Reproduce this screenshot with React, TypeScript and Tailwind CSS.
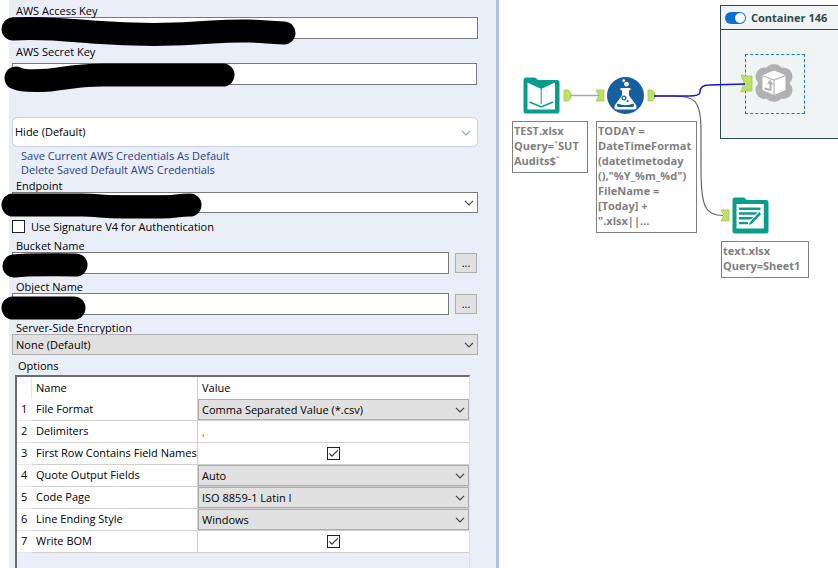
import type { ReactNode } from "react";

const fieldClass = "block w-full h-[22px] border border-[#7a7a7a] bg-white px-1 outline-none";

function Chevron({ className }: { className: string }) {
  return (
    <svg viewBox="0 0 10 6" className={`pointer-events-none absolute w-[10px] h-[6px] ${className}`}>
      <path d="M1 0.8 L5 4.8 L9 0.8" fill="none" stroke="currentColor" strokeWidth="1.2" />
    </svg>
  );
}

function Redaction({ d }: { d: string }) {
  return (
    <svg className="pointer-events-none absolute left-0 top-0 h-px w-px overflow-visible" aria-hidden="true">
      <path d={d} fill="none" stroke="#000" strokeWidth="23" strokeLinecap="round" strokeLinejoin="round" />
    </svg>
  );
}

function Label({ htmlFor, children }: { htmlFor: string; children: ReactNode }) {
  return (
    <label htmlFor={htmlFor} className="block pl-1 leading-3">
      {children}
    </label>
  );
}

function GridSelect({ label, value }: { label: string; value: string }) {
  return (
    <div className="relative">
      <select
        aria-label={label}
        className="block h-[21px] w-full appearance-none border border-[#adadad] bg-[#e1e1e1] pl-[3px] pt-[2px] outline-none"
      >
        <option>{value}</option>
      </select>
      <Chevron className="right-1 top-2 text-[#444]" />
    </div>
  );
}

function CheckBox({ id, label, checked }: { id?: string; label?: string; checked?: boolean }) {
  return (
    <span className="relative block size-[13px]">
      <input
        type="checkbox"
        id={id}
        aria-label={label}
        defaultChecked={checked}
        className="peer block size-[13px] appearance-none border border-[#222] bg-white"
      />
      <svg viewBox="0 0 13 13" className="pointer-events-none absolute inset-0 hidden peer-checked:block">
        <path d="M2.5 6.5 L5 9.2 L10.7 3.3" fill="none" stroke="#333" strokeWidth="1.2" />
      </svg>
    </span>
  );
}

const options = [
  { name: "File Format", type: "select", value: "Comma Separated Value (*.csv)" },
  { name: "Delimiters", type: "text", value: "," },
  { name: "First Row Contains Field Names", type: "check", value: "" },
  { name: "Quote Output Fields", type: "select", value: "Auto" },
  { name: "Code Page", type: "select", value: "ISO 8859-1 Latin I" },
  { name: "Line Ending Style", type: "select", value: "Windows" },
  { name: "Write BOM", type: "check", value: "" },
];

function OptionsTable() {
  return (
    <table className="w-full table-fixed border-separate border-spacing-0 bg-white">
      <colgroup>
        <col className="w-[15px]" />
        <col className="w-[166px]" />
        <col />
      </colgroup>
      <thead>
        <tr className="h-[22px] text-left">
          <th className="border-r border-[#e3e3e3] p-0" />
          <th className="border-r border-[#d0d0d0] p-0 pl-1 font-normal">Name</th>
          <th className="p-0 pl-1 font-normal">Value</th>
        </tr>
      </thead>
      <tbody>
        {options.map((o, i) => (
          <tr key={o.name} className="h-[22px]">
            <td className="border-b border-[#e8e8e8] p-0 pl-1">{i + 1}</td>
            <td className="whitespace-nowrap border-b border-r border-[#d0d0d0] p-0 pl-1">{o.name}</td>
            <td className="border-b border-[#d0d0d0] p-0">
              {o.type === "select" && <GridSelect label={o.name} value={o.value} />}
              {o.type === "text" && (
                <input
                  aria-label={o.name}
                  defaultValue={o.value}
                  className="block h-5 w-full px-1 text-[#c0632b] outline-none"
                />
              )}
              {o.type === "check" && (
                <div className="flex justify-center">
                  <CheckBox label={o.name} checked />
                </div>
              )}
            </td>
          </tr>
        ))}
      </tbody>
    </table>
  );
}

function BrowseField({ id, label, redaction }: { id: string; label: string; redaction: string }) {
  return (
    <div className="mt-[7px]">
      <Label htmlFor={id}>{label}</Label>
      <div className="relative flex items-center gap-[6px] pr-px">
        <input id={id} className={fieldClass} />
        <button
          type="button"
          aria-label={`Browse ${label}`}
          className="h-5 w-[22px] shrink-0 border border-[#adadad] bg-[#e1e1e1] leading-4"
        >
          ...
        </button>
        <Redaction d={redaction} />
      </div>
    </div>
  );
}

function SettingsPanel() {
  return (
    <form className="ml-[9px] flex flex-col border-r-[3px] border-[#b0c0e3] bg-[#eaeef9] pl-[3px] pr-[18px] pt-[5px]">
      <div className="relative">
        <Label htmlFor="access">AWS Access Key</Label>
        <input id="access" className={fieldClass} />
        <Redaction d="M1 24 C30 22 55 25 80 27 C120 30 165 30 200 27 C230 25 245 26 272 28" />
      </div>
      <div className="relative mt-[7px] pr-px">
        <Label htmlFor="secret">AWS Secret Key</Label>
        <input id="secret" className={`${fieldClass} mt-[5px]`} />
        <Redaction d="M4 32 C10 35 25 35 38 34 C60 31 70 29 90 29 L211 29" />
      </div>

      <div className="relative mt-8">
        <select
          aria-label="Credentials"
          className="block h-[30px] w-full appearance-none rounded-[5px] border border-[#c3d1ea] bg-white pl-[2px] outline-none"
        >
          <option>Hide (Default)</option>
        </select>
        <Chevron className="right-[7px] top-[13px] text-[#8ba0cc]" />
      </div>

      <div className="mt-[2px] flex flex-col items-start pl-[9px] leading-[14px] text-[#27408b]">
        <a href="#save">Save Current AWS Credentials As Default</a>
        <a href="#delete">Delete Saved Default AWS Credentials</a>
      </div>

      <div className="mt-[3px]">
        <Label htmlFor="endpoint">Endpoint</Label>
        <div className="relative">
          <select
            id="endpoint"
            className="block h-[21px] w-full appearance-none border border-[#7a7a7a] bg-white outline-none"
          />
          <span className="absolute left-[84px] top-[3px] h-2 w-24 bg-[#0067b8]" />
          <Chevron className="right-1 top-2 text-[#444]" />
          <Redaction d="M1 13 L70 13 C85 13 92 15 110 15 L150 15 C165 15 165 13 178 13" />
        </div>
      </div>

      <div className="mt-[7px] flex items-center gap-[6px] leading-[13px]">
        <CheckBox id="sigv4" />
        <label htmlFor="sigv4">Use Signature V4 for Authentication</label>
      </div>

      <BrowseField id="bucket" label="Bucket Name" redaction="M2 14 C20 12 40 13 64 13" />
      <BrowseField id="object" label="Object Name" redaction="M1 15 L62 15" />

      <div className="mt-[7px]">
        <Label htmlFor="encryption">Server-Side Encryption</Label>
        <div className="relative">
          <select
            id="encryption"
            className="block h-[21px] w-full appearance-none border border-[#adadad] bg-[#e1e1e1] pl-[3px] pt-[2px] outline-none"
          >
            <option>None (Default)</option>
          </select>
          <Chevron className="right-1 top-2 text-[#444]" />
        </div>
      </div>

      <h2 className="mt-[5px] pl-[6px] leading-3">Options</h2>
      <div className="ml-[3px] mr-2 mt-[3px] grow border-l-2 border-r border-t-2 border-l-[#6b6b6b] border-r-[#e0e0e0] border-t-[#6b6b6b]">
        <OptionsTable />
      </div>
    </form>
  );
}

function FolderShape() {
  return (
    <path
      d="M3 0.5 H12 L15 3 H34 Q36.5 3 36.5 5.5 V34 Q36.5 36.5 34 36.5 H3 Q0.5 36.5 0.5 34 V3 Q0.5 0.5 3 0.5 Z"
      fill="#0a9d8c"
    />
  );
}

function InputDataIcon() {
  return (
    <svg viewBox="0 0 37 37" className="size-[37px]">
      <FolderShape />
      <path d="M4.5 5.5 L18.2 12 L32 5.5 V32.5 H4.5 Z" fill="#fff" />
      <path d="M18.2 12 V27" stroke="#0a9d8c" strokeWidth="1" />
      <path d="M6.5 25 L18.2 30 L30 25" fill="none" stroke="#0a9d8c" strokeWidth="1.6" />
    </svg>
  );
}

function FormulaIcon() {
  return (
    <svg viewBox="0 0 37 37" className="size-[37px]">
      <circle cx="18.5" cy="18.5" r="18.5" fill="#155f9e" />
      <path
        d="M13.5 11 H23.5 V13.2 H22 V18.5 L29 28 Q31 32.5 26.5 32.5 H10.5 Q6 32.5 8 28 L15 18.5 V13.2 H13.5 Z"
        fill="#fff"
      />
      <path d="M10.5 26.5 Q18.5 30 26.5 26.5 L27 28.5 Q27 30 25.5 30 H11.5 Q10 30 10 28.5 Z" fill="#155f9e" />
      <circle cx="17" cy="21" r="1.9" fill="none" stroke="#155f9e" strokeWidth="1.2" />
      <circle cx="20.5" cy="24.2" r="1.1" fill="#155f9e" />
      <circle cx="19.5" cy="7.2" r="2.4" fill="#fff" />
      <circle cx="16.7" cy="3.6" r="1.4" fill="#fff" />
    </svg>
  );
}

function OutputDataIcon() {
  return (
    <svg viewBox="0 0 37 37" className="size-[37px]">
      <FolderShape />
      <path d="M4.5 7 H31.8 V31.5 H4.5 Z" fill="#fff" />
      <path d="M7 11.7 H28.5 M7 16.5 H25.5 M7 21.3 H21 M7 26.1 H16" stroke="#0a9d8c" strokeWidth="2.4" />
      <path d="M28.5 16 L17.5 27.5" stroke="#fff" strokeWidth="5" />
      <path d="M28.2 16 L19 25.8" stroke="#0a9d8c" strokeWidth="2.6" />
      <path d="M18.2 24.7 L20.2 26.7 L16.7 28 Z" fill="#0a9d8c" />
    </svg>
  );
}

function MacroIcon() {
  return (
    <svg viewBox="0 0 38 38" className="size-[38px]">
      <g fill="#b1b1b1">
        <circle cx="19" cy="19" r="16" />
        <circle cx="19" cy="10" r="10" />
        <circle cx="9.5" cy="12.5" r="9" />
        <circle cx="28.5" cy="12.5" r="9" />
        <circle cx="9.5" cy="26" r="9" />
        <circle cx="28.5" cy="26" r="9" />
        <circle cx="19" cy="28" r="10" />
      </g>
      <path d="M19 6.5 L30.5 11.2 V26 L19 31 L7.5 26 V11.2 Z" fill="#fff" />
      <path d="M7.5 11.5 L19 16 L30.5 11.5 M19 16 V31" fill="none" stroke="#b1b1b1" strokeWidth="1.2" />
      <path d="M9.5 24.5 L15.5 26 V19" fill="none" stroke="#b1b1b1" strokeWidth="2" />
      <path d="M12 19.5 L15.3 15.5 L18.5 21 Z" fill="#b1b1b1" />
    </svg>
  );
}

function Canvas() {
  return (
    <main className="relative overflow-hidden bg-white font-bold leading-[15px] text-[#7f7f7f]">
      <section className="absolute left-[221px] top-[5px] h-[134px] w-[160px] border border-[#2f4a4a] bg-[#f0f4f5]">
        <header className="flex h-6 items-center gap-[5px] border-b border-[#2f4a4a] pl-1">
          <button
            type="button"
            role="switch"
            aria-checked="true"
            aria-label="Enable container"
            className="flex h-3 w-[21px] justify-end rounded-full bg-[#0c6fd1] p-px"
          >
            <span className="block size-[10px] rounded-full bg-white" />
          </button>
          <h2 className="text-[#2f4a4a]">Container 146</h2>
        </header>
      </section>
      <div className="absolute left-[246px] top-[54px] size-[60px] border border-dashed border-[#0c78d8]" />

      <svg viewBox="0 0 339 568" className="absolute left-0 top-0 h-[568px] w-[339px]">
        <g fill="#bfe069" stroke="#9dbd55" strokeWidth="0.7">
          <path d="M65 90 H69 L72 93 V98 L69 101 H65 Z" />
          <path d="M149 90 H153 L156 93 V98 L153 101 H149 Z" />
          <path d="M97 90 H105 V101 H97 L100 95.5 Z" />
          <path d="M222 210 H230 V221 H222 L225 215.5 Z" />
          <path d="M242 75 L246 76 H253 V91 H246 L242 92 L245 83 Z" />
        </g>
        <path d="M71 95.5 H100" stroke="#a6a6a6" strokeWidth="1.5" />
        <path
          d="M155 96 H175 C194 97 202 98 202 130 V170 C202 208 207 215.5 224 215.5"
          fill="none"
          stroke="#666"
          strokeWidth="1.2"
        />
        <path
          d="M155 96 H190 Q201 96 201 92 Q201 85 210 85 L246 84"
          fill="none"
          stroke="#1515e0"
          strokeWidth="1.5"
        />
      </svg>

      <div className="absolute left-[24px] top-[77px]">
        <InputDataIcon />
      </div>
      <div className="absolute left-[108px] top-[77px]">
        <FormulaIcon />
      </div>
      <div className="absolute left-[233px] top-[197px]">
        <OutputDataIcon />
      </div>
      <div className="absolute left-[256px] top-[64px]">
        <MacroIcon />
      </div>

      <p className="absolute left-[13px] top-[121px] h-[52px] w-[76px] border border-[#7f7f7f] bg-white pl-px pt-px">
        TEST.xlsx
        <br />
        Query=`SUT
        <br />
        Audits$`
      </p>
      <p className="absolute left-[97px] top-[121px] h-[112px] w-[101px] border border-[#7f7f7f] bg-white pl-px pt-px">
        TODAY =<br />
        DateTimeFormat
        <br />
        (datetimetoday
        <br />
        (),"%Y_%m_%d")
        <br />
        FileName =<br />
        [Today] +<br />
        ".xlsx||...
      </p>
      <p className="absolute left-[222px] top-[241px] h-[37px] w-[88px] border border-[#7f7f7f] bg-white pl-px pt-px">
        text.xlsx
        <br />
        Query=Sheet1
      </p>
    </main>
  );
}

export default function App() {
  return (
    <div className="grid min-h-screen grid-cols-[499fr_339fr] bg-white font-['Open_Sans','Noto_Sans',sans-serif] text-[11px] text-black">
      <SettingsPanel />
      <Canvas />
    </div>
  );
}
